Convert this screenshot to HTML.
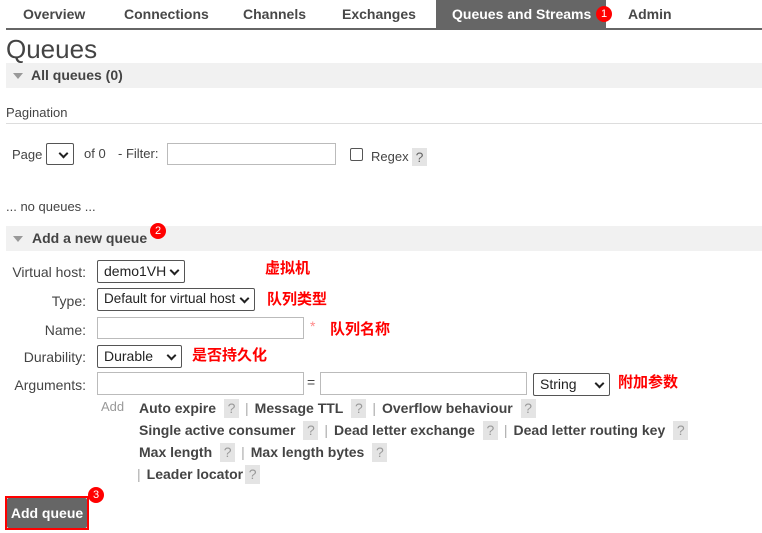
<!DOCTYPE html>
<html><head><meta charset="utf-8"><style>
*{box-sizing:border-box;margin:0;padding:0}
body{width:762px;height:533px;background:#fff;font-family:"Liberation Sans","DejaVu Sans",sans-serif;font-size:14px;color:#444;position:relative;overflow:hidden}
.a{position:absolute;white-space:nowrap}
.nav{font-weight:bold;font-size:14px;color:#484848;top:6px}
.bar{position:absolute;left:6px;right:0;height:25px;background:#f1f1f1}
.tri{position:absolute;width:0;height:0;border-left:5px solid transparent;border-right:5px solid transparent;border-top:6px solid #999}
.badge{position:absolute;width:16px;height:16px;border-radius:50%;background:#f00;color:#fff;font-size:11px;text-align:center;line-height:16px}
.box{position:absolute;border:1px solid #bbb;background:#fff}
.sel{position:absolute;border:1px solid #555;border-radius:2px;background:#fff;font-size:14px;color:#222;padding:2px 0 0 6px}
.sel:after{content:"";position:absolute;right:6px;top:6px;width:5px;height:5px;border-right:2px solid #222;border-bottom:2px solid #222;transform:rotate(45deg)}
.lbl{position:absolute;text-align:right;width:86px;left:0}
.cn{position:absolute;color:#f00;font-weight:bold;font-size:15px;font-family:"Liberation Sans","Noto Sans CJK SC",sans-serif}
.q{display:inline-block;background:#e4e4e4;color:#999;font-weight:normal;width:15px;text-align:center;height:19px;line-height:19px;margin-left:8px}
.b{font-weight:bold;color:#444}
.sep{color:#aaa;margin:0 6px}
.row{position:absolute;left:139px}
.pg{font-size:13px}
</style></head><body>
<div class="a" style="left:436px;top:0;width:170px;height:29px;background:#666"></div>
<div class="a" style="left:6px;top:28px;width:756px;height:2px;background:#666"></div>
<div class="a nav" style="left:23px">Overview</div>
<div class="a nav" style="left:124px">Connections</div>
<div class="a nav" style="left:243px">Channels</div>
<div class="a nav" style="left:342px">Exchanges</div>
<div class="a nav" style="left:452px;color:#fff">Queues and Streams</div>
<div class="a nav" style="left:628px">Admin</div>
<div class="badge" style="left:596px;top:6px">1</div>

<div class="a" style="left:6px;top:34px;font-size:26px;color:#444">Queues</div>
<div class="bar" style="top:63px"></div>
<div class="tri" style="left:13px;top:73px"></div>
<div class="a b" style="left:31px;top:67px">All queues (0)</div>

<div class="a" style="left:6px;top:105px;font-size:13px">Pagination</div>
<div class="a" style="left:6px;top:123px;width:756px;height:1px;background:#ddd"></div>

<div class="a pg" style="left:12px;top:147px">Page</div>
<div class="sel" style="left:46px;top:143px;width:28px;height:22px"></div>
<div class="a pg" style="left:84px;top:146px">of 0</div>
<div class="a pg" style="left:118px;top:146px">- Filter:</div>
<div class="box" style="left:167px;top:143px;width:169px;height:22px"></div>
<div class="a" style="left:350px;top:148px;width:13px;height:13px;border:1px solid #555;border-radius:2px"></div>
<div class="a pg" style="left:371px;top:149px">Regex</div>
<div class="a" style="left:412px;top:148px;width:15px;height:18px;background:#e4e4e4;color:#666;text-align:center;line-height:18px">?</div>

<div class="a" style="left:6px;top:199px;font-size:13px">... no queues ...</div>

<div class="bar" style="top:226px"></div>
<div class="tri" style="left:13px;top:236px"></div>
<div class="a b" style="left:32px;top:230px">Add a new queue</div>
<div class="badge" style="left:150px;top:223px">2</div>

<div class="lbl" style="top:264px">Virtual host:</div>
<div class="sel" style="left:97px;top:260px;width:88px;height:23px">demo1VH</div>
<div class="cn" style="left:265px;top:257px">虚拟机</div>

<div class="lbl" style="top:293px">Type:</div>
<div class="sel" style="left:97px;top:288px;width:158px;height:23px;font-size:13.5px">Default for virtual host</div>
<div class="cn" style="left:267px;top:288px">队列类型</div>

<div class="lbl" style="top:322px">Name:</div>
<div class="box" style="left:97px;top:317px;width:207px;height:22px"></div>
<div class="a" style="left:310px;top:318px;color:#f88">*</div>
<div class="cn" style="left:330px;top:318px">队列名称</div>

<div class="lbl" style="top:349px">Durability:</div>
<div class="sel" style="left:97px;top:345px;width:85px;height:23px">Durable</div>
<div class="cn" style="left:192px;top:344px">是否持久化</div>

<div class="lbl" style="top:377px">Arguments:</div>
<div class="box" style="left:97px;top:372px;width:207px;height:23px"></div>
<div class="a" style="left:307px;top:374px">=</div>
<div class="box" style="left:320px;top:372px;width:207px;height:23px"></div>
<div class="sel" style="left:533px;top:373px;width:77px;height:23px">String</div>
<div class="cn" style="left:618px;top:371px">附加参数</div>

<div class="a" style="left:101px;top:399px;color:#999;font-size:13px">Add</div>
<div class="row" style="top:399px"><span class="b">Auto expire</span><span class="q">?</span><span class="sep">|</span><span class="b">Message TTL</span><span class="q">?</span><span class="sep">|</span><span class="b">Overflow behaviour</span><span class="q">?</span></div>
<div class="row" style="top:421px"><span class="b">Single active consumer</span><span class="q">?</span><span class="sep">|</span><span class="b">Dead letter exchange</span><span class="q">?</span><span class="sep">|</span><span class="b">Dead letter routing key</span><span class="q">?</span></div>
<div class="row" style="top:443px"><span class="b">Max length</span><span class="q">?</span><span class="sep">|</span><span class="b">Max length bytes</span><span class="q">?</span></div>
<div class="row" style="top:465px;left:131px"><span class="sep">|</span><span class="b">Leader locator</span><span class="q" style="margin-left:2px">?</span></div>

<div class="a" style="left:5px;top:496px;width:84px;height:34px;border:2px solid #f00;background:#fff"></div>
<div class="a" style="left:7px;top:498px;width:80px;height:30px;background:#666;border-radius:2px;color:#fff;font-weight:bold;text-align:center;line-height:30px;font-size:14px">Add queue</div>
<div class="badge" style="left:88px;top:487px">3</div>
</body></html>
